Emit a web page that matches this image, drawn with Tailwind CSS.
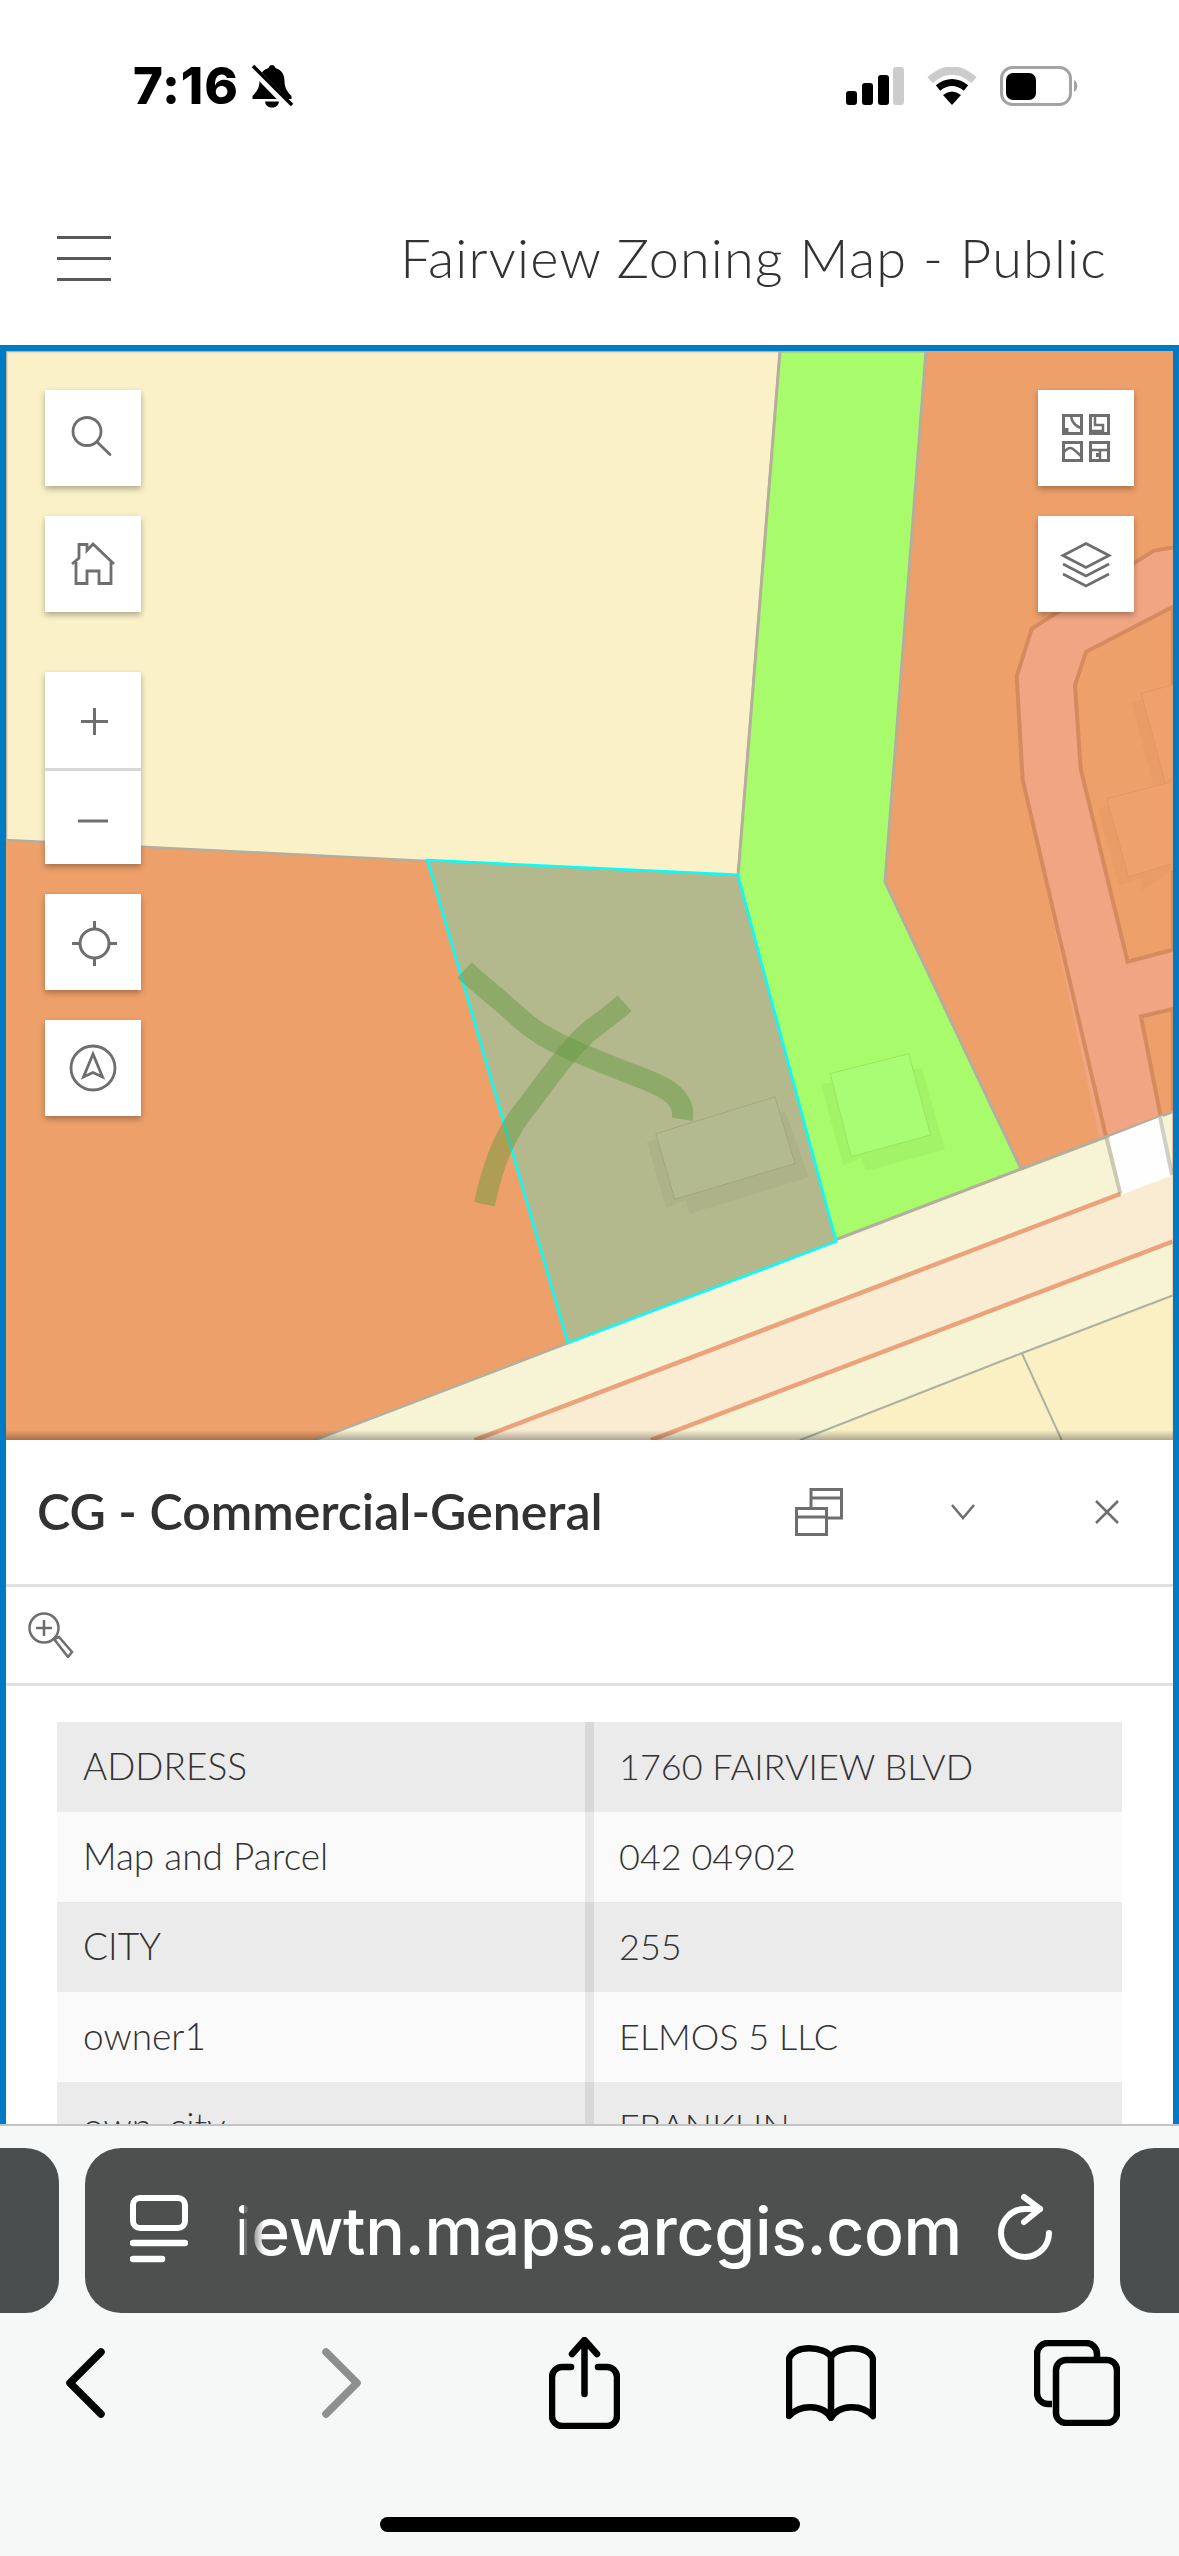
<!DOCTYPE html>
<html>
<head>
<meta charset="utf-8">
<script src="https://cdn.jsdelivr.net/npm/@tailwindcss/browser@4"></script>
</head>
<body class="bg-white">
<div class="w-[1179px] h-[2556px] flex flex-col overflow-hidden bg-white font-['Lato',sans-serif]">

  <!-- status bar -->
  <div class="h-[171px] shrink-0 flex items-center pl-[133px] pr-[99px]">
    <span class="font-['Inter',sans-serif] font-extrabold text-[51px] leading-none tracking-[0.8px] text-black">7:16</span>
    <svg class="ml-[11px]" width="44" height="44" viewBox="0 0 44 44">
      <path d="M22 1c-2 0-3 1.500-3.500 3C12 6 9.500 11 9.500 17c0 7-3 11-7 15v3h39v-3c-4-4-7-8-7-15 0-6-2.500-11-9-13C25 2.500 24 1 22 1z" fill="#000"/>
      <path d="M15 37.500c.5 4 3.500 6 7 6s6.500-2 7-6z" fill="#000"/>
      <path d="M1 3L40 43" stroke="#fff" stroke-width="8"/>
      <path d="M3 2L42 41" stroke="#000" stroke-width="3.500"/>
    </svg>
    <div class="ml-auto flex items-center">
      <svg width="58" height="38" viewBox="0 0 58 38">
        <rect x="0" y="24" width="11" height="14" rx="3" fill="#000"/>
        <rect x="16" y="16" width="11" height="22" rx="3" fill="#000"/>
        <rect x="32" y="8" width="11" height="30" rx="3" fill="#000"/>
        <rect x="47" y="0" width="11" height="38" rx="3" fill="#ccc"/>
      </svg>
      <svg class="ml-[22px]" width="52" height="38" viewBox="0 0 52 38">
        <path d="M4 13Q26-6 48 13" fill="none" stroke="#ccc" stroke-width="8"/>
        <path d="M12 21Q26 10 40 21" fill="none" stroke="#000" stroke-width="7"/>
        <path d="M26 38L17 28Q26 21 35 28Z" fill="#000"/>
      </svg>
      <svg class="ml-[22px]" width="80" height="40" viewBox="0 0 80 40">
        <rect x="1.500" y="1.500" width="69" height="37" rx="11" fill="#fff" stroke="#a3a3a3" stroke-width="3"/>
        <rect x="6" y="7" width="30" height="27" rx="7" fill="#000"/>
        <path d="M74 14a7 7 0 0 1 0 12z" fill="#a3a3a3"/>
      </svg>
    </div>
  </div>

  <!-- header -->
  <div class="h-[174px] shrink-0 flex items-center justify-between pl-[57px] pr-[72px]">
    <div class="w-[54px] flex flex-col gap-[18px]">
      <div class="h-[3px] bg-[#595959]"></div>
      <div class="h-[3px] bg-[#595959]"></div>
      <div class="h-[3px] bg-[#595959]"></div>
    </div>
    <div class="text-[54px] leading-none font-light text-[#323232] tracking-[1.2px]">Fairview Zoning Map - Public</div>
  </div>

  <!-- framed app -->
  <div class="h-[1779px] shrink-0 border-x-[6px] border-t-[6px] border-[#007ac2] flex flex-col overflow-hidden">

    <!-- map -->
    <div class="relative h-[1089px] shrink-0 overflow-hidden">
      <svg class="absolute inset-0" width="1167" height="1089" viewBox="6 351 1167 1089">
        <rect x="6" y="351" width="1167" height="1089" fill="#eea06a"/>
        <polygon points="6,840 427,861 738,876 780,351 6,351" fill="#faf1c8" stroke="#b5ae9c" stroke-width="2.500"/>
        <polygon points="780,351 926,351 885,882 1024,1175 836,1250 738,876" fill="#a8fc6b" stroke="#b5ae9c" stroke-width="3"/>

        <g transform="translate(950 360) scale(.3333 .5485)">
          <polygon points="669,342 610,348 245,490 200,577 218,765 512,1600 669,1600" fill="#f2a582"/>
          <polyline points="669,342 610,348 245,490 200,577 218,765 512,1530" fill="none" stroke="#d68b5f" stroke-width="4" vector-effect="non-scaling-stroke"/>
          <polygon points="669,450 408,532 375,593 392,745 533,1097 669,1075" fill="#eea06a" stroke="#d68b5f" stroke-width="4" vector-effect="non-scaling-stroke"/>
          <polygon points="669,1183 573,1197 665,1480 669,1480" fill="#eea06a" stroke="#d68b5f" stroke-width="4" vector-effect="non-scaling-stroke"/>
          <polygon points="545,625 669,600 669,770 612,778" fill="#e89c66"/>
          <polygon points="574,608 669,592 669,760 646,772" fill="#efa16d" stroke="#e39765" stroke-width="1" vector-effect="non-scaling-stroke"/>
          <polygon points="443,818 620,790 669,800 669,930 575,968 570,945 507,958" fill="#e89c66"/>
          <polygon points="471,800 646,772 669,770 669,918 535,942" fill="#efa16d" stroke="#e39765" stroke-width="1" vector-effect="non-scaling-stroke"/>
        </g>

        <g transform="translate(400 800) scale(.4968 .4146)">
          <polygon points="-200,1557 1555,752 1555,1600 -200,1600" fill="#f7f3d5"/>
          <polyline points="-200,1557 338,1310" fill="none" stroke="#b5ae9c" stroke-width="2.500" vector-effect="non-scaling-stroke"/>
          <polyline points="878,1060 1250,890 1555,752" fill="none" stroke="#b5ae9c" stroke-width="3" vector-effect="non-scaling-stroke"/>
          <polygon points="150,1544 1450,950 1555,905 1555,1065 505,1544" fill="#faecd2"/>
          <line x1="150" y1="1544" x2="1450" y2="950" stroke="#eba37c" stroke-width="4.500" vector-effect="non-scaling-stroke"/>
          <line x1="505" y1="1544" x2="1555" y2="1065" stroke="#eba37c" stroke-width="4.500" vector-effect="non-scaling-stroke"/>
          <polygon points="805,1568 920,1490 1250,1335 1555,1195 1555,1568" fill="#faf0c4"/>
          <polyline points="805,1544 920,1490 1250,1335 1555,1195" fill="none" stroke="#aeb0a0" stroke-width="2" vector-effect="non-scaling-stroke"/>
          <line x1="1252" y1="1335" x2="1332" y2="1544" stroke="#aeb0a0" stroke-width="2" vector-effect="non-scaling-stroke"/>
          <polygon points="1428,812 1535,762 1555,905 1452,952" fill="#fefefe"/>
          <line x1="1422" y1="815" x2="1450" y2="950" stroke="#8a8a78" stroke-opacity=".4" stroke-width="4" vector-effect="non-scaling-stroke"/>
          <line x1="1530" y1="765" x2="1554" y2="905" stroke="#8a8a78" stroke-opacity=".4" stroke-width="4" vector-effect="non-scaling-stroke"/>

          <!-- green building -->
          <polygon points="848,685 1050,647 1097,843 938,895 930,862 892,882" fill="#a2f367"/>
          <polygon points="866,660 1024,612 1068,808 908,860" fill="#a9fd75" stroke="#9ae560" stroke-width="1" vector-effect="non-scaling-stroke"/>

          <!-- selected parcel -->
          <polygon points="55,145 680,180 878,1065 338,1310" fill="#b3b98d"/>
          <polygon points="497,825 775,750 823,910 583,998 575,965 536,985" fill="#aeb288"/>
          <polygon points="515,805 755,716 795,877 553,963" fill="#b4ba90" stroke="#a3a77f" stroke-width="1" vector-effect="non-scaling-stroke"/>
          <polygon points="55,145 680,180 878,1065 338,1310" fill="none" stroke="#00ffff" stroke-width="2.500" vector-effect="non-scaling-stroke"/>
        </g>
        <g transform="translate(400 800) scale(.4968 .4146)" fill="none" stroke="#5f9a3c" stroke-opacity=".45" stroke-width="21">
          <path vector-effect="non-scaling-stroke" d="M130 410C170 455 205 485 235 520C270 560 310 585 360 610C400 630 440 650 490 672C540 695 575 720 568 770"/>
          <path vector-effect="non-scaling-stroke" d="M452 490C420 525 390 545 365 575C320 630 285 695 245 755C205 820 185 890 170 975"/>
        </g>
      </svg>
      <div class="absolute bottom-0 left-0 right-0 h-[10px] bg-linear-to-t from-black/30 to-transparent"></div>

      <!-- left widgets -->
      <div class="absolute left-[39px] top-[39px] flex flex-col w-[96px]">
        <div class="h-[96px] bg-white shadow-[0_3px_6px_rgba(0,0,0,0.3)]">
          <svg width="96" height="96" viewBox="0 0 96 96" fill="none" stroke="#6e6e6e" stroke-width="2.800">
            <circle cx="42" cy="41.500" r="14"/><path d="M52 52L65 64.500" stroke-linecap="round"/>
          </svg>
        </div>
        <div class="h-[96px] mt-[30px] bg-white shadow-[0_3px_6px_rgba(0,0,0,0.3)]">
          <svg width="96" height="96" viewBox="0 0 96 96" fill="none" stroke="#6e6e6e" stroke-width="2.800">
            <path d="M27 48L34 42V28.500H42V34.500L48 28L69 48"/><path d="M31 46V67.500H42V55H54V67.500H66V46"/>
          </svg>
        </div>
        <div class="mt-[60px] bg-white shadow-[0_3px_6px_rgba(0,0,0,0.3)] flex flex-col">
          <div class="h-[99px] border-b-[3px] border-[#d8d8d8]">
            <svg width="96" height="96" viewBox="0 0 96 96" fill="none" stroke="#6e6e6e" stroke-width="3">
              <path d="M36 49.500H63M49.500 36V63"/>
            </svg>
          </div>
          <div class="h-[93px]">
            <svg width="96" height="93" viewBox="0 0 96 93" fill="none" stroke="#6e6e6e" stroke-width="3">
              <path d="M33 50H63"/>
            </svg>
          </div>
        </div>
        <div class="h-[96px] mt-[30px] bg-white shadow-[0_3px_6px_rgba(0,0,0,0.3)]">
          <svg width="96" height="96" viewBox="0 0 96 96" fill="none" stroke="#6e6e6e" stroke-width="3">
            <circle cx="49.500" cy="49.500" r="14.500"/><path d="M27 49.500H35M64 49.500H72M49.500 27V35M49.500 64V72"/>
          </svg>
        </div>
        <div class="h-[96px] mt-[30px] bg-white shadow-[0_3px_6px_rgba(0,0,0,0.3)]">
          <svg width="96" height="96" viewBox="0 0 96 96" fill="none" stroke="#6e6e6e" stroke-width="2.800">
            <circle cx="48" cy="48" r="22"/><path d="M48 34L38.500 57L48 52.500L57.500 57Z" stroke-linejoin="miter"/>
          </svg>
        </div>
      </div>

      <!-- right widgets -->
      <div class="absolute right-[39px] top-[39px] flex flex-col gap-[30px] w-[96px]">
        <div class="h-[96px] bg-white shadow-[0_3px_6px_rgba(0,0,0,0.3)]">
          <svg width="96" height="96" viewBox="0 0 96 96" fill="none" stroke="#6e6e6e" stroke-width="3">
            <rect x="25.500" y="25.500" width="18" height="18"/>
            <rect x="52.500" y="25.500" width="18" height="18"/>
            <rect x="25.500" y="52.500" width="18" height="18"/>
            <rect x="52.500" y="52.500" width="18" height="18"/>
            <path d="M33 26Q34 35 44 38.500" stroke-width="2.500"/>
            <rect x="27" y="38" width="3.500" height="4" fill="#6e6e6e" stroke="none"/>
            <path d="M57 26V35H65V41H53" stroke-width="2.500"/>
            <path d="M26 62Q31 56 35 59T44 67" stroke-width="2.500"/>
            <path d="M53 60H70M62 60V69" stroke-width="2.500"/>
            <rect x="58" y="63" width="4" height="4" fill="#6e6e6e" stroke="none"/>
          </svg>
        </div>
        <div class="h-[96px] bg-white shadow-[0_3px_6px_rgba(0,0,0,0.3)]">
          <svg width="96" height="96" viewBox="0 0 96 96" fill="none" stroke="#6e6e6e" stroke-width="2.800">
            <path d="M48 27.500L71 39.500L48 51.500L25 39.500Z"/>
            <path d="M25 48L48 60L71 48"/><path d="M25 58L48 70L71 58"/>
          </svg>
        </div>
      </div>
    </div>

    <!-- panel -->
    <div class="flex-1 min-h-0 bg-white flex flex-col">
      <div class="h-[144px] shrink-0 flex items-center pl-[31px] pr-[54px] text-[#323232]">
        <div class="text-[50px] leading-none font-semibold -mt-[3px]">CG - Commercial-General</div>
        <svg class="ml-auto" width="48" height="48" viewBox="0 0 48 48" fill="none" stroke="#6e6e6e" stroke-width="3">
          <rect x="1.500" y="20.500" width="30" height="26"/><path d="M1.500 29H31.500"/>
          <path d="M16 19V1.500H46.500V30H33M16 10H46"/>
        </svg>
        <svg class="ml-[108px]" width="24" height="16" viewBox="0 0 24 16" fill="none" stroke="#6e6e6e" stroke-width="2.500">
          <path d="M1 1L12 14L23 1"/>
        </svg>
        <svg class="ml-[120px]" width="24" height="24" viewBox="0 0 24 24" fill="none" stroke="#6e6e6e" stroke-width="2.500">
          <path d="M1 1L23 23M23 1L1 23"/>
        </svg>
      </div>
      <div class="h-[102px] shrink-0 border-y-[3px] border-[#e0e0e0] flex items-center pl-[22px]">
        <svg width="46" height="46" viewBox="0 0 46 46" fill="none" stroke="#6e6e6e" stroke-width="2.500">
          <circle cx="16" cy="16" r="14.500"/><path d="M8 16H24M16 8V24"/>
          <path d="M26 27L31 25L44 40L40 45Z"/>
        </svg>
      </div>
      <div class="pt-[36px] px-[51px] text-[37px] font-light text-[#323232]">
        <div class="flex h-[90px] bg-[#ebebeb]"><div class="w-[537px] pl-[26px] pb-[2px] flex items-center border-r-[9px] border-[#d8d8d8]">ADDRESS</div><div class="pl-[25px] pb-[2px] flex items-center text-[36px]">1760 FAIRVIEW BLVD</div></div>
        <div class="flex h-[90px] bg-[#fafafa]"><div class="w-[537px] pl-[26px] pb-[2px] flex items-center border-r-[9px] border-[#e8e8e8]">Map and Parcel</div><div class="pl-[25px] pb-[2px] flex items-center text-[36px]">042 04902</div></div>
        <div class="flex h-[90px] bg-[#ebebeb]"><div class="w-[537px] pl-[26px] pb-[2px] flex items-center border-r-[9px] border-[#d8d8d8]">CITY</div><div class="pl-[25px] pb-[2px] flex items-center text-[36px]">255</div></div>
        <div class="flex h-[90px] bg-[#fafafa]"><div class="w-[537px] pl-[26px] pb-[2px] flex items-center border-r-[9px] border-[#e8e8e8]">owner1</div><div class="pl-[25px] pb-[2px] flex items-center text-[36px]">ELMOS 5 LLC</div></div>
        <div class="flex h-[90px] bg-[#ebebeb]"><div class="w-[537px] pl-[26px] pb-[2px] flex items-center border-r-[9px] border-[#d8d8d8]">own_city</div><div class="pl-[25px] pb-[2px] flex items-center text-[36px]">FRANKLIN</div></div>
      </div>
    </div>
  </div>

  <!-- safari chrome -->
  <div class="flex-1 min-h-0 bg-[#f6f7f7] border-t-2 border-[#c4c4c4] relative">
    <div class="mt-[22px] h-[165px] flex">
      <div class="w-[59px] shrink-0 rounded-r-[34px] bg-[#4b4e4f]"></div>
      <div class="ml-[26px] w-[1009px] shrink-0 rounded-[36px] bg-[#4e4f4f] flex items-center pl-[45px] pr-[40px] relative">
        <svg class="shrink-0 -mt-[3px]" width="58" height="68" viewBox="0 0 58 68" fill="none" stroke="#fff" stroke-width="6" stroke-linecap="round">
          <rect x="3" y="3" width="52" height="30" rx="7"/>
          <path d="M3 48H55M3 64H32" stroke-width="6.500"/>
        </svg>
        <div class="ml-[47px] text-[66px] leading-none font-medium font-['Inter',sans-serif] text-white tracking-[-0.3px] whitespace-nowrap">iewtn.maps.arcgis.com</div>
        <div class="absolute left-[159px] top-[30px] w-[20px] h-[100px] bg-linear-to-r from-[#4e4f4f]/80 from-30% to-transparent"></div>
        <svg class="ml-auto shrink-0 -mt-[6px]" width="56" height="68" viewBox="0 0 56 68" fill="none" stroke="#fff" stroke-width="6" stroke-linecap="round" stroke-linejoin="round">
          <path d="M42 15H27A24 24 0 1 0 51 39"/>
          <path d="M26 3L42 15L26 28"/>
        </svg>
      </div>
      <div class="ml-[26px] flex-1 rounded-l-[34px] bg-[#4b4e4f]"></div>
    </div>
    <div class="h-[140px] flex items-center pl-[65px]">
      <svg width="40" height="70" viewBox="0 0 40 70" fill="none" stroke="#000" stroke-width="7.500" stroke-linecap="round" stroke-linejoin="round"><path d="M36 4L5 35L36 66"/></svg>
      <svg class="ml-[216px]" width="41" height="70" viewBox="0 0 41 70" fill="none" stroke="#8e8e8e" stroke-width="7.500" stroke-linecap="round" stroke-linejoin="round"><path d="M5 4L36 35L5 66"/></svg>
      <svg class="ml-[187px]" width="71" height="92" viewBox="0 0 71 92" fill="none" stroke="#000" stroke-width="6.500" stroke-linecap="round" stroke-linejoin="round">
        <path d="M22 30H13A10 10 0 0 0 3 40V79A10 10 0 0 0 13 89H58A10 10 0 0 0 68 79V40A10 10 0 0 0 58 30H49"/>
        <path d="M35.500 57V4M23 17L35.500 3L48 17"/>
      </svg>
      <svg class="ml-[166px]" width="90" height="76" viewBox="0 0 90 76" fill="none" stroke="#000" stroke-width="6.500" stroke-linejoin="round">
        <path d="M45 12C39 1 7-1 3 14V71C14 59 37 59 45 73C53 59 76 59 87 71V14C83-1 51 1 45 12V70"/>
      </svg>
      <svg class="ml-[158px]" width="86" height="86" viewBox="0 0 86 86" fill="none" stroke="#000" stroke-width="6.500" stroke-linejoin="round">
        <path d="M18 64H14A11 11 0 0 1 3 53V14A11 11 0 0 1 14 3H52A11 11 0 0 1 63 14V20"/>
        <rect x="22" y="20" width="61" height="63" rx="10"/>
      </svg>
    </div>
    <div class="mt-[64px] ml-[380px] w-[420px] h-[15px] rounded-full bg-black"></div>
  </div>
</div>
</body>
</html>
